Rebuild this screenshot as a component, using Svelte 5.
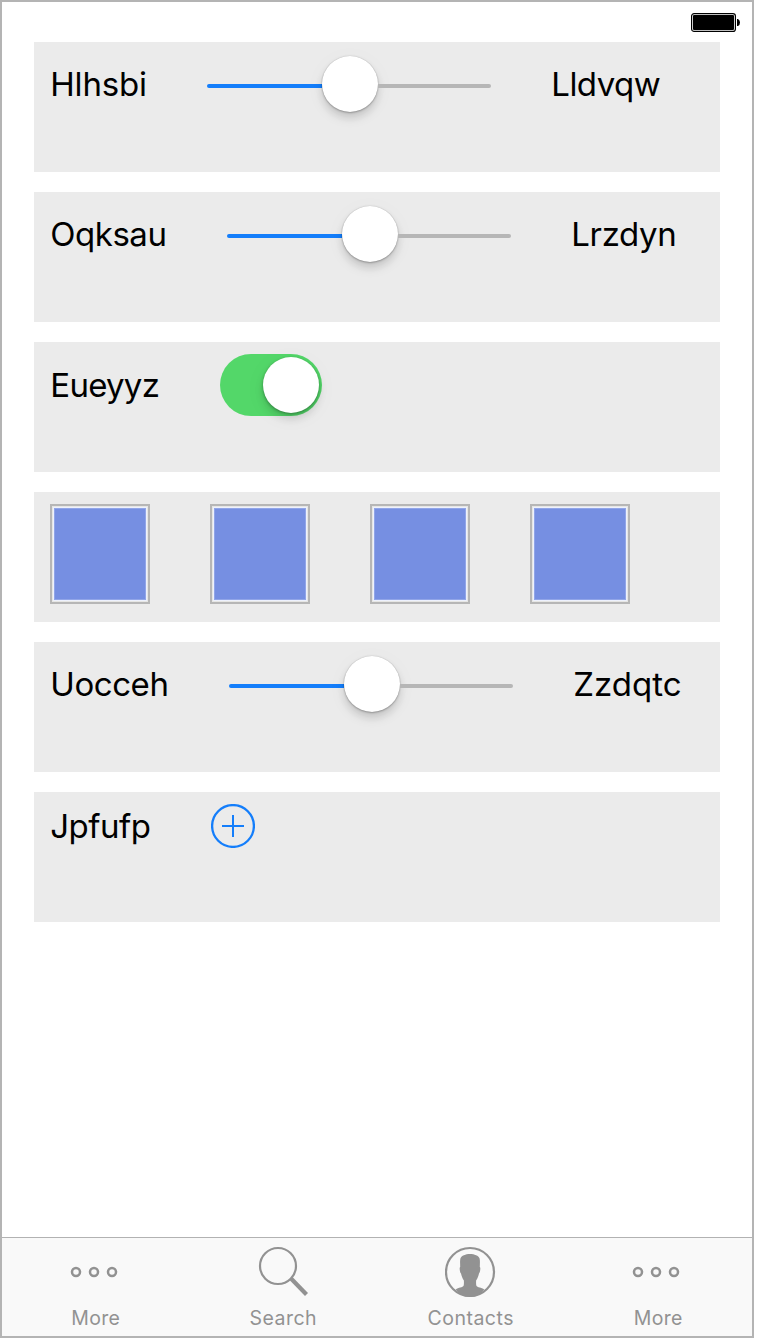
<script>
  const rows = [
    { kind: 'slider', label: 'Hlhsbi', width: 97, end: 'Lldvqw', endWidth: 109 },
    { kind: 'slider', label: 'Oqksau', width: 117, end: 'Lrzdyn', endWidth: 105 },
    { kind: 'switch', label: 'Eueyyz', width: 110 },
    { kind: 'swatches' },
    { kind: 'slider', label: 'Uocceh', width: 119, end: 'Zzdqtc', endWidth: 108 },
    { kind: 'add', label: 'Jpfufp', width: 101 }
  ];
  const tabs = ['More', 'Search', 'Contacts', 'More'];
</script>

{#snippet text(value, width, extra = 0)}
  <svg class="label" style:width="{width}px" height="44" overflow="visible">
    <text x="0.3" y="32" textLength={width - 0.4 + extra} lengthAdjust="spacing">{value}</text>
  </svg>
{/snippet}

<div class="screen">
  <header>
    <svg width="50" height="20" viewBox="0 0 50 20">
      <rect x="0.6" y="0.6" width="43.8" height="17.8" rx="2.5" fill="#fff" stroke="#000" stroke-width="1.2" />
      <rect x="2" y="2" width="41" height="15" rx="1" />
      <path d="M46 6h1q2 1 2 3.5T47 13h-1z" />
    </svg>
  </header>

  <main>
    {#each rows as row}
      <section class={row.kind}>
        {#if row.label}{@render text(row.label, row.width)}{/if}
        {#if row.kind === 'slider'}
          <div class="range"><i class="fill"></i><b class="knob"></b><i class="rest"></i></div>
          {@render text(row.end, row.endWidth, 0.8)}
        {:else if row.kind === 'switch'}
          <div class="toggle"><b class="knob"></b></div>
        {:else if row.kind === 'swatches'}
          {#each [0, 1, 2, 3] as n (n)}<div class="swatch"><div></div></div>{/each}
        {:else}
          <svg width="44" height="44" viewBox="0 0 44 44" fill="none" stroke="#147efb" stroke-width="2">
            <circle cx="22" cy="22" r="20.9" stroke-width="2.3" />
            <path d="M11 22h22M22 11v22" />
          </svg>
        {/if}
      </section>
    {/each}
  </main>

  <nav>
    {#each tabs as tab}
      <div class="tab">
        <svg width="52" height="52" viewBox="0 0 52 52" fill="none" stroke="#929292" stroke-width="2.2">
          {#if tab === 'More'}
            <g stroke-width="2.5"><circle cx="6" cy="26" r="4" /><circle cx="24" cy="26" r="4" /><circle cx="42" cy="26" r="4" /></g>
          {:else if tab === 'Search'}
            <circle cx="21" cy="20" r="18" />
            <path d="M34 32.5 49.5 48.500" stroke-width="4.2" />
          {:else}
            <circle cx="25" cy="26" r="24" />
            <path
              d="M25 8c4.500 0 8.500 1.600 9.600 4.500.6 2.500.2 5.500.2 8.500q.8.500.4 3-.3 3-1.200 3.500c-.6 3-1.600 5-2.800 6.800-.2 1.700-.2 3.200.1 5.200 1 2.300 5.200 1.800 8 4Q34 51 25 51t-14.300-7.500c2.800-2.200 7-1.700 8-4 .3-2 .3-3.500.1-5.200-1.200-1.800-2.200-3.800-2.800-6.800-.9-.5-1.200-3.500-1.200-3.500q-.4-2.500.4-3c0-3-.4-6 .2-8.500C16.500 9.600 20.500 8 25 8Z"
              fill="#929292" stroke="none"
            />
          {/if}
        </svg>
        <span class:wide={tab === 'More'}>{tab}</span>
      </div>
    {/each}
  </nav>
</div>

<style>
  :global(body) { margin: 0; background: #fff; }
  .screen {
    box-sizing: border-box;
    width: 754px;
    height: 1338px;
    border: 2px solid #b4b4b4;
    display: flex;
    flex-direction: column;
    background: #fff;
    font-family: Inter, "Liberation Sans", sans-serif;
  }
  header { height: 40px; box-sizing: border-box; padding: 11px 11px 0 0; display: flex; justify-content: flex-end; }
  main { flex: 1; display: flex; flex-direction: column; gap: 20px; padding: 0 32px; }
  section {
    box-sizing: border-box;
    width: 686px;
    height: 130px;
    padding: 12px 16px;
    display: flex;
    align-items: flex-start;
    gap: 60px;
    background: #ebebeb;
  }
  svg { display: block; flex: none; }
  .label { font-size: 33px; fill: #000; }
  .slider .label { margin-top: 10px; }
  .switch .label { margin-top: 11px; }
  .add .label { margin-top: 2px; }
  .range { width: 284px; height: 60px; display: flex; align-items: center; flex: none; }
  .range i { height: 4px; margin-top: 4px; }
  .fill { width: 115px; background: #147efb; border-radius: 2px 0 0 2px; }
  .rest { width: 113px; background: #b6b6b6; border-radius: 0 2px 2px 0; }
  .knob { width: 56px; height: 56px; border-radius: 50%; background: #fff; flex: none; }
  .range .knob {
    box-shadow: 0 0 1px rgba(0, 0, 0, .25), 0 1px 2px rgba(0, 0, 0, .25), 0 6px 8px rgba(0, 0, 0, .15), 0 4px 24px rgba(0, 0, 0, .03);
  }
  .toggle {
    box-sizing: border-box;
    width: 102px;
    height: 62px;
    padding: 3px;
    display: flex;
    justify-content: flex-end;
    border-radius: 31px;
    background: #53d769;
  }
  .toggle .knob { box-shadow: 0 1px 3px rgba(0, 0, 0, .32), 0 6px 8px rgba(0, 0, 0, .13), 0 4px 24px rgba(0, 0, 0, .04); }
  .swatch { box-sizing: border-box; width: 100px; height: 100px; padding: 1px; border: 2px solid #b6b6b6; background: #e6e6e4; }
  .swatch div { box-sizing: border-box; height: 94px; border: 1px solid #edf1fd; background: #768fe2; box-shadow: inset 0 0 0 1px #91a5e8; }
  nav { height: 98px; border-top: 1px solid #b2b2b2; background: #f9f9f9; display: flex; }
  .tab { width: 187.5px; display: flex; flex-direction: column; align-items: center; padding-top: 8px; box-sizing: border-box; }
  .tab span { margin-top: 8px; font-size: 19.5px; line-height: 24px; letter-spacing: .5px; color: #929292; }
  .tab .wide { letter-spacing: .35px; }
</style>
